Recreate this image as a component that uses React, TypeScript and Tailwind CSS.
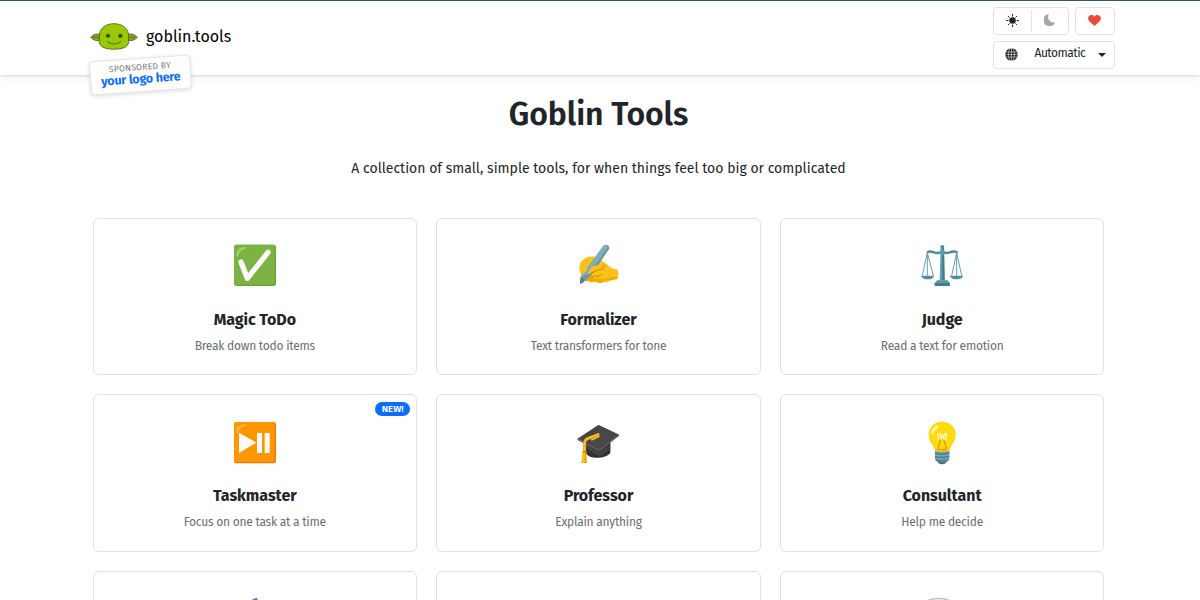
import React from 'react';

const CheckIcon = () => (
  <svg viewBox="0 0 180 180" className="size-[60px]">
    <rect x="27" y="29" width="126" height="124" rx="8" fill="#68a338" />
    <rect x="27" y="29" width="122" height="120" rx="7" fill="#7cb342" />
    <path d="M34 61Q35 38 61 35Q65 40 57 43Q41 49 40 63Q36 70 34 61" fill="#a4cf79" />
    <path d="M48 81L67 130L129 52" fill="none" stroke="#fafafa" strokeWidth="16" strokeLinecap="round" strokeLinejoin="round" />
  </svg>
);

const WritingIcon = () => (
  <svg viewBox="0 0 180 180" className="mr-px size-[60px]">
    <path d="M80 65C57 62 41 72 36 88C31 105 37 121 51 136L73 141L110 141C118 145 130 133 148 132Q154 116 148 103Q133 105 117 88C104 76 91 75 80 65Z" fill="#fbc11a" />
    <path d="M39 121C43 135 54 142 63 138C68 144 77 143 81 137C90 147 103 146 110 137L148 132V125C130 125 120 132 101 132L68 128Z" fill="#f2ab00" />
    <path d="M108 30Q124 26 124 41L71 120L45 143L36 146L38 126Z" fill="#6f98a5" />
    <path d="M108 30Q120 31 118 39L62 116L38 126Z" fill="#82aeb9" />
    <path d="M38 126L50 133L43 144L36 146Z" fill="#5f7f8e" />
    <path d="M39 85Q35 104 49 113L58 105Q48 96 54 78Z" fill="#fbc11a" />
    <path d="M105 88C113 96 104 105 94 105C80 107 73 112 63 118C59 110 66 99 76 93Z" fill="#fbc11a" />
    <path d="M107 90Q112 104 92 105Q78 107 68 115M64 124Q74 131 80 122M84 123Q93 128 98 118" fill="none" stroke="#df8e00" strokeWidth="3.5" strokeLinecap="round" />
  </svg>
);

const ScalesIcon = () => (
  <svg viewBox="0 0 180 180" className="size-[60px]">
    <g fill="none" stroke="#659fae" strokeWidth="3">
      <path d="M46 53L31 122M46 53L64 122M46 53V122M134 53L119 122M134 53L149 122M134 53V122" />
    </g>
    <path d="M27 122H67Q63 133 47 133Q31 133 27 122ZM113 122H154Q149 133 134 133Q118 133 113 122Z" fill="#528e9f" />
    <path d="M47 51C62 43 74 64 89 49C104 64 117 43 134 51" fill="none" stroke="#4c899a" strokeWidth="7" strokeLinecap="round" />
    <path d="M86 37H96L98 136H83Z" fill="#659dab" />
    <path d="M91 39H96L98 136H91Z" fill="#427b8c" />
    <circle cx="91" cy="36" r="6" fill="#518d9e" />
    <circle cx="91" cy="52" r="8" fill="#5e9bab" />
    <path d="M76 136H106L114 145V153H68V145Z" fill="#457e90" />
    <path d="M77 136H104L111 143H71Z" fill="#669eab" />
  </svg>
);

const PlayPauseIcon = () => (
  <svg viewBox="0 0 180 180" className="size-[60px]">
    <rect x="27" y="30" width="126" height="124" rx="7" fill="#f57c00" />
    <rect x="27" y="30" width="121" height="119" rx="6" fill="#ff9800" />
    <path d="M34 59Q33 38 61 36Q65 40 57 43Q41 48 40 62Q36 68 34 59" fill="#ffb44c" />
    <path d="M42 62L94 92L42 123ZM96 63H111V123H96ZM119 63H134V123H119Z" fill="#fafafa" />
  </svg>
);

const CapIcon = () => (
  <svg viewBox="0 0 180 180" className="size-[60px]">
    <path d="M54 82V123C63 143 113 142 127 122V78Z" fill="#303030" />
    <path d="M54 96L93 120L127 98V112L93 134L54 108Z" fill="#424242" />
    <path d="M28 80L91 39L153 68L94 112Z" fill="#444" />
    <path d="M28 80L94 112L153 68V72L94 118L28 84Z" fill="#606060" />
    <path d="M91 39L153 68L94 112L63 96Z" fill="#484848" />
    <path d="M94 67L64 78Q49 83 50 93V122" fill="none" stroke="#e89a12" strokeWidth="9" strokeLinejoin="round" />
    <path d="M93 65L63 77Q49 82 50 94V117M94 73L70 84" fill="none" stroke="#fcc21b" strokeWidth="5" strokeLinejoin="round" />
    <path d="M45 116L55 116L56 153H40Z" fill="#e59600" />
    <path d="M44 122L51 121L50 153H40Z" fill="#fcc21b" />
    <path d="M44 119H56" stroke="#bf7500" strokeWidth="3" />
  </svg>
);

const BulbIcon = () => (
  <svg viewBox="0 0 180 180" className="size-[60px]">
    <path d="M90 29C66 29 50 46 50 68C50 92 68 98 69 120H112C114 97 131 91 131 68C131 45 114 29 90 29Z" fill="#fdd020" />
    <path d="M90 31C67 31 52 47 52 68C52 87 63 92 68 106H113C117 91 129 86 129 67C129 45 112 31 90 31Z" fill="#fddc0c" />
    <path d="M77 113L84 88Q91 75 97 88L104 113M76 113H105" fill="none" stroke="#e59a00" strokeWidth="4" />
    <path d="M79 82L78 67Q83 61 85 68L88 83L91 68L95 83L98 67Q104 61 104 69L101 83" fill="none" stroke="#fff7bf" strokeWidth="4" strokeLinecap="round" strokeLinejoin="round" />
    <path d="M58 61Q62 43 77 40Q83 44 76 50Q66 57 63 67Q58 69 58 61Z" fill="#fff59d" />
    <path d="M69 116Q90 122 112 116V143L104 150Q99 157 90 157Q82 157 77 150L69 143Z" fill="#75a7b2" />
    <path d="M69 124Q91 129 112 123M69 134Q91 139 112 133M72 144Q91 149 109 143" fill="none" stroke="#49798a" strokeWidth="4" />
    <path d="M77 147Q90 153 104 147Q101 157 90 157Q79 157 77 147Z" fill="#437083" />
  </svg>
);

const TimerIcon = () => (
  <svg viewBox="0 0 180 180" className="size-[60px]">
    <path d="M82 34L97 29V47H91V36H83Z" fill="#607b8b" />
  </svg>
);

const BowlIcon = () => (
  <svg viewBox="0 0 180 180" className="size-[60px]">
    <ellipse cx="80" cy="49" rx="43" ry="20" fill="#bdbdbd" />
    <ellipse cx="80" cy="53" rx="40" ry="20" fill="#eee" />
  </svg>
);

const Goblin = () => (
  <svg viewBox="0 0 144 84" className="h-7 w-12 shrink-0">
    <g stroke="#50592a" strokeWidth="2.5" strokeLinejoin="round">
      <path d="M31 36Q17 27 2 43Q16 58 32 50ZM113 36Q127 27 142 43Q128 58 112 50Z" fill="#82ad14" />
      <path d="M8 43Q20 40 30 45M136 43Q124 40 114 45" fill="none" />
      <path d="M72 2C43 2 27 19 28 41C29 51 25 58 31 66C40 83 104 83 113 66C118 58 115 51 116 41C117 18 99 2 72 2Z" fill="#99c900" />
    </g>
    <circle cx="54" cy="38" r="7.5" fill="#749800" />
    <circle cx="91" cy="38" r="7.5" fill="#749800" />
    <circle cx="54" cy="38" r="4.5" fill="#27300f" />
    <circle cx="91" cy="38" r="4.5" fill="#27300f" />
    <path d="M55 58Q72 69 90 58M52 55L57 59M92 55L88 60" fill="none" stroke="#53701a" strokeWidth="3" strokeLinecap="round" />
  </svg>
);

const SunIcon = () => (
  <svg viewBox="0 0 16 16" className="size-[13px]" fill="#212529">
    <circle cx="8" cy="8" r="4" />
    <path d="M8 0v3M8 13v3M0 8h3M13 8h3M2.3 2.3l2.1 2.1M11.6 11.6l2.1 2.1M2.3 13.7l2.1-2.1M11.6 4.4l2.1-2.1" stroke="#212529" strokeWidth="1.2" />
  </svg>
);

const MoonIcon = () => (
  <svg viewBox="0 0 16 16" className="mb-0.5 ml-px size-3" fill="#a4a6a8">
    <path d="M6.5.3A7.5 7.5 0 0 0 5.5 4c0 4 3.2 7.2 7.2 7.2.8 0 1.5-.1 2.2-.3A8 8 0 1 1 6.5.3Z" />
  </svg>
);

const HeartIcon = () => (
  <svg viewBox="0 0 14 12" className="mb-0.5 h-[11px] w-[13px]" fill="#e74c3c">
    <path d="M7 2C8-.6 11-.4 12.5.8 14.5 2.4 14.3 5 12.6 6.7L7 12 1.4 6.7C-.3 5-.5 2.4 1.5.8 3-.4 6-.6 7 2Z" />
  </svg>
);

const GlobeIcon = () => (
  <svg viewBox="0 0 26 26" className="mb-0.5 size-[13px]">
    <circle cx="13" cy="13" r="12.5" fill="#212529" />
    <g fill="none" stroke="#fff" strokeWidth="1">
      <ellipse cx="13" cy="13" rx="6" ry="13" />
      <path d="M13 0v26M0 13h26M1 8h24M1 18h24" />
    </g>
  </svg>
);

interface Tool {
  id: number;
  name?: string;
  description?: string;
  icon?: React.FC;
  isNew?: boolean;
}

const tools: Tool[] = [
  { id: 1, name: 'Magic ToDo', description: 'Break down todo items', icon: CheckIcon },
  { id: 2, name: 'Formalizer', description: 'Text transformers for tone', icon: WritingIcon },
  { id: 3, name: 'Judge', description: 'Read a text for emotion', icon: ScalesIcon },
  { id: 4, name: 'Taskmaster', description: 'Focus on one task at a time', icon: PlayPauseIcon, isNew: true },
  { id: 5, name: 'Professor', description: 'Explain anything', icon: CapIcon },
  { id: 6, name: 'Consultant', description: 'Help me decide', icon: BulbIcon },
  { id: 7, icon: TimerIcon },
  { id: 8 },
  { id: 9, icon: BowlIcon },
];

const ToolCard: React.FC<{ tool: Tool }> = ({ tool }) => {
  const Icon = tool.icon;
  return (
    <div className="relative flex h-[157.3px] flex-col items-center rounded-md border border-[#dee2e6] bg-white pt-[16.3px]">
      {tool.isNew && (
        <span className="absolute right-1.5 top-[7px] flex h-3.5 w-[35px] items-center justify-center rounded-full bg-[#0d6efd] text-[9.5px] font-semibold tracking-[0.1px] text-white">
          NEW!
        </span>
      )}
      <div className="h-[60px]">{Icon && <Icon />}</div>
      <h2 className="mt-[12.6px] text-base leading-6 font-bold tracking-[-0.05px]">{tool.name}</h2>
      <p className="mt-[5.2px] text-xs leading-[18px] tracking-[-0.25px] text-[#6b6e71]">{tool.description}</p>
    </div>
  );
};

const Header = () => (
  <header className="h-[75px] border-t border-[#34527a] bg-white shadow-[0_1px_2px_rgba(0,0,0,0.1),0_3px_8px_rgba(0,0,0,0.06)]">
    <div className="ml-[90px] flex w-[1024.5px] justify-between">
      <div className="relative flex h-[71px] items-center gap-2">
        <Goblin />
        <span className="text-base text-black">goblin.tools</span>
        <div className="absolute left-0 top-[57px] flex h-[34px] w-[101px] -rotate-4 flex-col items-center rounded border border-[#e3e6e9] bg-white pt-1 shadow-[0_1px_4px_rgba(0,0,0,0.15)]">
          <span className="text-[8.5px] leading-[9px] tracking-[0.3px] text-[#777]">SPONSORED BY</span>
          <span className="text-[12.5px] leading-[14px] font-bold tracking-[-0.2px] whitespace-nowrap text-[#0d6efd]">your logo here</span>
        </div>
      </div>
      <div className="flex w-[122px] flex-col gap-1.5 pt-1.5">
        <div className="flex justify-between">
          <div className="flex h-7 w-19 items-center rounded border border-[#dee2e6]">
            <button className="flex h-[22px] flex-1 items-center justify-center border-r border-[#dee2e6] pb-0.5"><SunIcon /></button>
            <button className="flex h-[22px] w-9 items-center justify-center"><MoonIcon /></button>
          </div>
          <button className="flex h-7 w-10 items-center justify-center rounded border border-[#dee2e6]"><HeartIcon /></button>
        </div>
        <div className="flex h-7 items-center rounded border border-[#dee2e6] pl-[11px]">
          <GlobeIcon />
          <span className="ml-[17px] w-[52px] pb-1 text-xs tracking-[-0.5px] whitespace-nowrap">Automatic</span>
          <span className="ml-[11px] border-x-4 border-t-4 border-x-transparent border-t-[#212529]" />
        </div>
      </div>
    </div>
  </header>
);

const App: React.FC = () => {
  return (
    <div className="h-[600px] overflow-hidden bg-white font-['Fira_Sans','Open_Sans',sans-serif] text-[#212529]">
      <Header />
      <main className="ml-[92.5px] flex w-[1012px] flex-col">
        <h1 className="mt-5 text-center text-[32px] leading-[38px] font-semibold tracking-[-0.1px]">Goblin Tools</h1>
        <p className="mt-[25px] text-center text-[14px] leading-[22px]">
          A collection of small, simple tools, for when things feel too big or complicated
        </p>
        <div className="mt-[37.8px] grid grid-cols-3 gap-x-[19px] gap-y-[19.2px]">
          {tools.map((tool) => (
            <ToolCard key={tool.id} tool={tool} />
          ))}
        </div>
      </main>
    </div>
  );
};

export default App;
